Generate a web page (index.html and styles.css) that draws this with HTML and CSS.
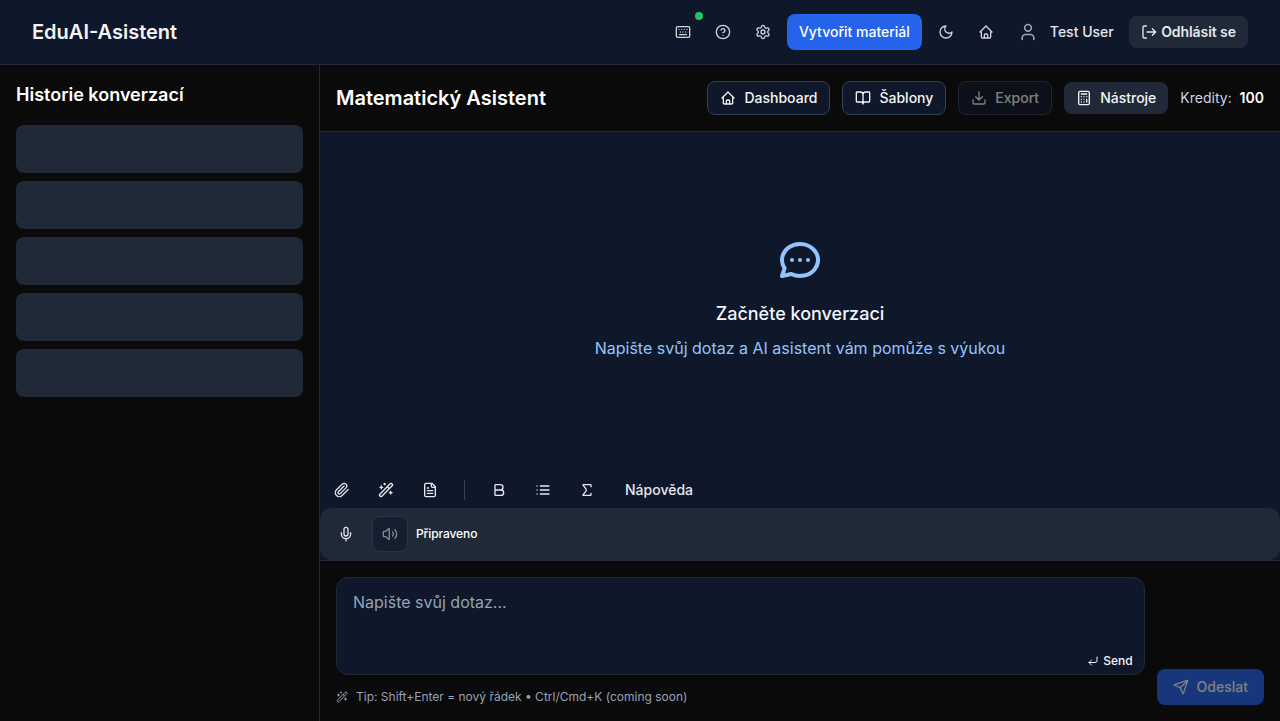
FILE: index.html
```html
<!DOCTYPE html>
<html lang="cs">
<head>
<meta charset="utf-8">
<title>EduAI-Asistent</title>
<link rel="stylesheet" href="styles.css">
</head>
<body>
<svg class="sprite" aria-hidden="true">
  <symbol id="keyboard" viewBox="0 0 24 24"><path d="M10 8h.01M12 12h.01M14 8h.01M16 12h.01M18 8h.01M6 8h.01M7 16h10M8 12h.01"/><rect width="20" height="16" x="2" y="4" rx="2"/></symbol>
  <symbol id="help" viewBox="0 0 24 24"><circle cx="12" cy="12" r="10"/><path d="M9.09 9a3 3 0 0 1 5.83 1c0 2-3 3-3 3M12 17h.01"/></symbol>
  <symbol id="settings" viewBox="0 0 24 24"><path d="M9.671 4.136a2.34 2.34 0 0 1 4.659 0 2.34 2.34 0 0 0 3.319 1.915 2.34 2.34 0 0 1 2.33 4.033 2.34 2.34 0 0 0 0 3.831 2.34 2.34 0 0 1-2.33 4.033 2.34 2.34 0 0 0-3.319 1.915 2.34 2.34 0 0 1-4.659 0 2.34 2.34 0 0 0-3.32-1.915 2.34 2.34 0 0 1-2.33-4.033 2.34 2.34 0 0 0 0-3.831A2.34 2.34 0 0 1 6.35 6.051a2.34 2.34 0 0 0 3.319-1.915"/><circle cx="12" cy="12" r="3"/></symbol>
  <symbol id="moon" viewBox="0 0 24 24"><path d="M12 3a6 6 0 0 0 9 9 9 9 0 1 1-9-9Z"/></symbol>
  <symbol id="home" viewBox="0 0 24 24"><path d="M5 12H3l9-9 9 9h-2M5 12v7a2 2 0 0 0 2 2h10a2 2 0 0 0 2-2v-7M9.5 21v-4.500a1.500 1.500 0 0 1 1.500-1.500h2a1.500 1.500 0 0 1 1.500 1.500V21"/></symbol>
  <symbol id="user" viewBox="0 0 24 24"><path d="M19 21v-2a4 4 0 0 0-4-4H9a4 4 0 0 0-4 4v2"/><circle cx="12" cy="7" r="4"/></symbol>
  <symbol id="logout" viewBox="0 0 24 24"><path d="M8 3H5a2 2 0 0 0-2 2v14a2 2 0 0 0 2 2h3M17 17l5-5-5-5M22 12H9"/></symbol>
  <symbol id="book" viewBox="0 0 24 24"><path d="M12 7v14M3 18a1 1 0 0 1-1-1V4a1 1 0 0 1 1-1h5a4 4 0 0 1 4 4 4 4 0 0 1 4-4h5a1 1 0 0 1 1 1v13a1 1 0 0 1-1 1h-6a3 3 0 0 0-3 3 3 3 0 0 0-3-3z"/></symbol>
  <symbol id="download" viewBox="0 0 24 24"><path d="M21 15v4a2 2 0 0 1-2 2H5a2 2 0 0 1-2-2v-4M7 10l5 5 5-5M12 15V3"/></symbol>
  <symbol id="calculator" viewBox="0 0 24 24"><rect width="16" height="20" x="4" y="2" rx="2"/><path d="M8 6h8M16 14v4M16 10h.01M12 10h.01M8 10h.01M12 14h.01M8 14h.01M12 18h.01M8 18h.01"/></symbol>
  <symbol id="chat" viewBox="0 0 24 24"><path d="M3 20l1.300-3.900c-2.324-3.437-1.426-7.872 2.100-10.374 3.526-2.501 8.590-2.296 11.845.480 3.255 2.777 3.695 7.266 1.029 10.501-2.666 3.235-7.615 4.215-11.574 2.293L3 20M12 12v.01M8 12v.01M16 12v.01"/></symbol>
  <symbol id="clip" viewBox="0 0 24 24"><path d="m21.440 11.050-9.190 9.190a6 6 0 0 1-8.490-8.490l8.570-8.570A4 4 0 1 1 18 8.840l-8.590 8.570a2 2 0 0 1-2.830-2.830l8.490-8.480"/></symbol>
  <symbol id="wand" viewBox="0 0 24 24"><path d="m21.640 3.640-1.280-1.280a1.210 1.210 0 0 0-1.720 0L2.360 18.640a1.210 1.210 0 0 0 0 1.720l1.280 1.280a1.200 1.200 0 0 0 1.720 0L21.640 5.360a1.200 1.200 0 0 0 0-1.720M14 7l3 3M5 6v4M19 14v4M10 2v2M7 8H3M21 16h-4M11 3H9"/></symbol>
  <symbol id="file" viewBox="0 0 24 24"><path d="M15 2H6a2 2 0 0 0-2 2v16a2 2 0 0 0 2 2h12a2 2 0 0 0 2-2V7ZM14 2v4a2 2 0 0 0 2 2h4M10 9H8M16 13H8M16 17H8"/></symbol>
  <symbol id="bold" viewBox="0 0 24 24"><path d="M6 12h9a4 4 0 0 1 0 8H7a1 1 0 0 1-1-1V5a1 1 0 0 1 1-1h7a4 4 0 0 1 0 8"/></symbol>
  <symbol id="list" viewBox="0 0 24 24"><path d="M3 12h.01M3 18h.01M3 6h.01M8 12h13M8 18h13M8 6h13"/></symbol>
  <symbol id="sigma" viewBox="0 0 24 24"><path d="M18 7V5a1 1 0 0 0-1-1H6.500a.5.5 0 0 0-.4.800l4.500 6a2 2 0 0 1 0 2.400l-4.500 6a.5.5 0 0 0 .4.800H17a1 1 0 0 0 1-1v-2"/></symbol>
  <symbol id="mic" viewBox="0 0 24 24"><path d="M12 19v3M19 10v2a7 7 0 0 1-14 0v-2"/><rect x="9" y="2" width="6" height="13" rx="3"/></symbol>
  <symbol id="volume" viewBox="0 0 24 24"><path d="M11 4.702a.705.705 0 0 0-1.203-.498L6.413 7.587A1.400 1.400 0 0 1 5.416 8H3a1 1 0 0 0-1 1v6a1 1 0 0 0 1 1h2.416a1.400 1.400 0 0 1 .997.413l3.383 3.384A.705.705 0 0 0 11 19.298zM16 9a5 5 0 0 1 0 6M19.364 18.364a9 9 0 0 0 0-12.728"/></symbol>
  <symbol id="enter" viewBox="0 0 24 24"><path d="m9 10-5 5 5 5M20 4v7a4 4 0 0 1-4 4H4"/></symbol>
  <symbol id="send" viewBox="0 0 24 24"><path d="M14.536 21.686a.5.5 0 0 0 .937-.024l6.500-19a.496.496 0 0 0-.635-.635l-19 6.500a.5.5 0 0 0-.024.937l7.930 3.180a2 2 0 0 1 1.112 1.110zM21.854 2.147l-10.940 10.939"/></symbol>
</svg>
<div class="app">
  <header class="topbar">
    <div class="brand">EduAI-Asistent</div>
    <nav class="topnav">
      <button class="icon-btn"><svg class="icon"><use href="#keyboard"/></svg><span class="status"></span></button>
      <button class="icon-btn"><svg class="icon"><use href="#help"/></svg></button>
      <button class="icon-btn"><svg class="icon"><use href="#settings"/></svg></button>
      <button class="btn create">Vytvořit materiál</button>
      <button class="icon-btn"><svg class="icon"><use href="#moon"/></svg></button>
      <button class="icon-btn"><svg class="icon"><use href="#home"/></svg></button>
      <div class="user"><svg class="icon icon-lg"><use href="#user"/></svg><span>Test User</span></div>
      <button class="btn secondary logout"><svg class="icon"><use href="#logout"/></svg>Odhlásit se</button>
    </nav>
  </header>
  <div class="body">
    <aside class="sidebar">
      <h2 class="side-title">Historie konverzací</h2>
      <div class="skeletons"><div class="skeleton"></div><div class="skeleton"></div><div class="skeleton"></div><div class="skeleton"></div><div class="skeleton"></div></div>
    </aside>
    <main class="main">
      <div class="main-head">
        <h1 class="main-title">Matematický Asistent</h1>
        <div class="actions">
          <button class="btn outline"><svg class="icon"><use href="#home"/></svg>Dashboard</button>
          <button class="btn outline"><svg class="icon"><use href="#book"/></svg>Šablony</button>
          <button class="btn outline disabled"><svg class="icon"><use href="#download"/></svg>Export</button>
          <button class="btn secondary tools"><svg class="icon"><use href="#calculator"/></svg>Nástroje</button>
          <div class="credits">Kredity: <b>100</b></div>
        </div>
      </div>
      <section class="chat">
        <svg class="chat-icon"><use href="#chat"/></svg>
        <h3 class="chat-title">Začněte konverzaci</h3>
        <p class="chat-text">Napište svůj dotaz a AI asistent vám pomůže s výukou</p>
      </section>
      <div class="toolbar">
        <button class="tool"><svg class="icon"><use href="#clip"/></svg></button>
        <button class="tool"><svg class="icon"><use href="#wand"/></svg></button>
        <button class="tool"><svg class="icon"><use href="#file"/></svg></button>
        <span class="divider"></span>
        <button class="tool"><svg class="icon"><use href="#bold"/></svg></button>
        <button class="tool"><svg class="icon"><use href="#list"/></svg></button>
        <button class="tool"><svg class="icon"><use href="#sigma"/></svg></button>
        <button class="btn hint">Nápověda</button>
      </div>
      <div class="audio-wrap"><div class="audio">
        <button class="tool"><svg class="icon"><use href="#mic"/></svg></button>
        <button class="tool speaker"><svg class="icon"><use href="#volume"/></svg></button>
        <span class="audio-text">Připraveno</span>
      </div></div>
      <footer class="composer">
        <div class="composer-col">
          <div class="input">
            <span class="placeholder">Napište svůj dotaz...</span>
            <span class="send-hint"><svg class="icon icon-sm"><use href="#enter"/></svg>Send</span>
          </div>
          <div class="tip"><svg class="icon icon-sm"><use href="#wand"/></svg>Tip: Shift+Enter = nový řádek • Ctrl/Cmd+K (coming soon)</div>
        </div>
        <button class="btn submit"><svg class="icon"><use href="#send"/></svg>Odeslat</button>
      </footer>
    </main>
  </div>
</div>
</body>
</html>
```
FILE: styles.css
```css
* { box-sizing: border-box; }
body { margin: 0; background: #0a0a0a; color: #f9fafb; font: 14px/20px Inter, "Liberation Sans", sans-serif; }
h1, h2, h3, p { margin: 0; }
button { font: inherit; color: inherit; border: 0; background: none; padding: 0; }
.sprite { display: none; }
.app { height: 721px; display: flex; flex-direction: column; overflow: hidden; }
.icon, .chat-icon { fill: none; stroke: currentColor; stroke-width: 2; stroke-linecap: round; stroke-linejoin: round; flex: none; display: block; }
.icon { width: 16px; height: 16px; }
.icon-lg { width: 20px; height: 20px; }
.icon-sm { width: 12px; height: 12px; }
.btn { display: inline-flex; align-items: center; justify-content: center; font-weight: 500; border-radius: 8px; white-space: nowrap; gap: 8px; }

.topbar { height: 65px; flex: none; display: flex; align-items: center; justify-content: space-between; padding: 0 32px; background: #0f172a; border-bottom: 1px solid #1f2937; }
.brand { font-size: 20px; line-height: 28px; font-weight: 600; color: #f3f4f6; }
.topnav { display: flex; align-items: center; gap: 8px; }
.icon-btn { position: relative; width: 32px; height: 32px; display: flex; align-items: center; justify-content: center; color: #d1d5db; }
.status { position: absolute; top: -4px; right: -4px; width: 8px; height: 8px; border-radius: 50%; background: #22c55e; }
.create { height: 36px; padding: 0 12px; background: #2563eb; color: #fff; }
.user { display: flex; align-items: center; gap: 12px; margin: 0 7.3px 0 8px; color: #e5e7eb; font-weight: 500; }
.user .icon { color: #94a3b8; }
.secondary { height: 32px; padding: 0 12px; background: #1f2937; color: #f3f4f6; }
.logout { width: 119px; gap: 4px; color: #e5e7eb; font-weight: 600; letter-spacing: -.08px; }

.body { flex: 1; min-height: 0; display: flex; }
.sidebar { width: 320px; flex: none; padding: 16px; border-right: 1px solid #1f2937; }
.side-title { font-size: 18px; line-height: 28px; font-weight: 600; margin-bottom: 16px; color: #fff; }
.skeletons { display: flex; flex-direction: column; gap: 8px; }
.skeleton { height: 48px; border-radius: 8px; background: #1f2937; }
.main { flex: 1; min-width: 0; display: flex; flex-direction: column; }
.main-head { height: 67px; flex: none; display: flex; align-items: center; justify-content: space-between; padding: 0 16px; border-bottom: 1px solid #1f2937; }
.main-title { font-size: 20px; line-height: 28px; font-weight: 600; color: #fff; }
.actions { display: flex; align-items: center; gap: 12px; }
.outline { height: 34px; padding: 0 12px; border: 1px solid #334155; background: #0f172a; color: #f3f4f6; }
.disabled { opacity: .5; }
.credits { color: #cbd5e1; }
.credits b { font-weight: 600; color: #fff; margin-left: 4px; }

.chat { flex: 1; background: #0f172a; display: flex; flex-direction: column; align-items: center; justify-content: center; }
.chat-icon { width: 48px; height: 48px; color: #93c5fd; margin-bottom: 16px; }
.chat-title { font-size: 18px; line-height: 28px; font-weight: 500; margin-bottom: 8px; color: #eff6ff; }
.chat-text { font-size: 16px; line-height: 24px; color: #93c5fd; margin-bottom: 8px; }
.toolbar { height: 36px; flex: none; display: flex; align-items: center; gap: 8px; padding-left: 4px; background: #0f172a; }
.tool { width: 36px; height: 36px; display: flex; align-items: center; justify-content: center; color: #e5e7eb; }
.divider { width: 1px; height: 20px; margin: 0 8px; background: #334155; }
.hint { padding: 0 12px; color: #e5e7eb; }
.audio-wrap { background: #0f172a; flex: none; }
.audio { height: 52px; display: flex; align-items: center; gap: 8px; padding: 0 8px; background: #1f2937; border-radius: 12px; }
.speaker { border: 1px solid #334155; border-radius: 8px; background: #0f172a; opacity: .5; }
.audio-text { font-size: 12px; line-height: 16px; font-weight: 500; letter-spacing: -.1px; color: #fff; }

.composer { height: 161px; flex: none; display: flex; align-items: flex-end; gap: 12px; padding: 16px; border-top: 1px solid #1f2937; }
.composer-col { flex: 1; height: 128px; display: flex; flex-direction: column; justify-content: space-between; }
.input { position: relative; height: 98px; padding: 12px 16px; border: 1px solid #1f2937; border-radius: 12px; background: #0f172a; }
.placeholder { display: block; font-size: 16px; line-height: 24px; color: #94a3b8; }
.send-hint { position: absolute; right: 11px; bottom: 5px; display: flex; align-items: center; gap: 4px; font-size: 12px; line-height: 16px; font-weight: 500; color: #f3f4f6; }
.tip { display: flex; align-items: center; gap: 8px; font-size: 12px; line-height: 16px; color: #94a3b8; }
.submit { height: 36px; padding: 0 16px; background: #2563eb; color: #f3f4f6; opacity: .5; }
```
